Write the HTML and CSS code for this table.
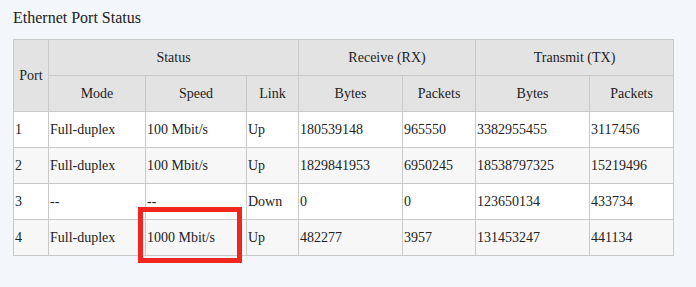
FILE: index.html
```html
<!DOCTYPE html>
<html>
<head>
<meta charset="utf-8">
<link rel="stylesheet" href="styles.css">
</head>
<body>
<div class="page">
  <h3 class="title">Ethernet Port Status</h3>
  <div class="table-wrap">
    <table class="ports">
      <colgroup>
        <col class="c-port"><col class="c-mode"><col class="c-speed"><col class="c-link">
        <col class="c-rxb"><col class="c-rxp"><col class="c-txb"><col class="c-txp">
      </colgroup>
      <thead>
        <tr>
          <th rowspan="2">Port</th>
          <th colspan="3">Status</th>
          <th colspan="2">Receive (RX)</th>
          <th colspan="2">Transmit (TX)</th>
        </tr>
        <tr>
          <th>Mode</th><th>Speed</th><th>Link</th>
          <th>Bytes</th><th>Packets</th>
          <th>Bytes</th><th>Packets</th>
        </tr>
      </thead>
      <tbody>
        <tr><td>1</td><td>Full-duplex</td><td>100 Mbit/s</td><td>Up</td><td>180539148</td><td>965550</td><td>3382955455</td><td>3117456</td></tr>
        <tr><td>2</td><td>Full-duplex</td><td>100 Mbit/s</td><td>Up</td><td>1829841953</td><td>6950245</td><td>18538797325</td><td>15219496</td></tr>
        <tr><td>3</td><td>--</td><td>--</td><td>Down</td><td>0</td><td>0</td><td>123650134</td><td>433734</td></tr>
        <tr><td>4</td><td>Full-duplex</td><td>1000 Mbit/s</td><td>Up</td><td>482277</td><td>3957</td><td>131453247</td><td>441134</td></tr>
      </tbody>
    </table>
    <div class="highlight"></div>
  </div>
</div>
</body>
</html>
```
FILE: styles.css
```css
html, body {
  margin: 0;
  padding: 0;
  background: #f3f6fa;
}
body {
  font-family: "Liberation Serif", "Times New Roman", Tinos, "DejaVu Serif", serif;
  color: #222;
}
.page {
  padding: 0 13px;
  min-height: 287px;
  box-sizing: border-box;
}
.title {
  margin: 0;
  padding-top: 9px;
  height: 39px;
  box-sizing: border-box;
  font-size: 16px;
  font-weight: normal;
  line-height: 18px;
}
.table-wrap {
  position: relative;
  width: 660px;
}
.ports {
  border-collapse: collapse;
  table-layout: fixed;
  width: 660px;
  font-family: inherit;
  font-size: 14px;
}
.c-port { width: 35px; }
.c-mode { width: 97px; }
.c-speed { width: 101px; }
.c-link { width: 52px; }
.c-rxb { width: 104px; }
.c-rxp { width: 73px; }
.c-txb { width: 114px; }
.c-txp { width: 84px; }
.ports th, .ports td {
  border: 1px solid #c9c9c9;
  height: 36px;
  padding: 0;
  box-sizing: border-box;
  white-space: nowrap;
  overflow: hidden;
}
.ports th {
  background: #e3e3e3;
  font-weight: normal;
  text-align: center;
}
.ports td {
  background: #fff;
  text-align: left;
  padding-left: 1px;
}
.ports tbody tr:nth-child(even) td {
  background: #f7f7f7;
}
.highlight {
  position: absolute;
  left: 125px;
  top: 168px;
  width: 104px;
  height: 56px;
  box-sizing: border-box;
  border: 5px solid #f1271f;
}
```
